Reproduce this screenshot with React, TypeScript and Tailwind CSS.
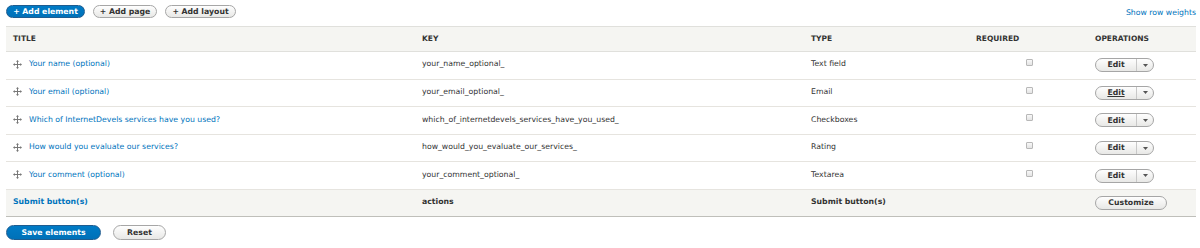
import React from "react";

const rows = [
  { title: "Your name (optional)", key: "your_name_optional_", type: "Text field", underline: false },
  { title: "Your email (optional)", key: "your_email_optional_", type: "Email", underline: true },
  { title: "Which of InternetDevels services have you used?", key: "which_of_internetdevels_services_have_you_used_", type: "Checkboxes", underline: false },
  { title: "How would you evaluate our services?", key: "how_would_you_evaluate_our_services_", type: "Rating", underline: false },
  { title: "Your comment (optional)", key: "your_comment_optional_", type: "Textarea", underline: false },
];

function DragHandle() {
  return (
    <svg width="9" height="9" viewBox="0 0 18 18" className="shrink-0">
      <path
        d="M9 0 L12 3.5 H10 V8 H14.5 V6 L18 9 L14.5 12 V10 H10 V14.5 H12 L9 18 L6 14.5 H8 V10 H3.5 V12 L0 9 L3.5 6 V8 H8 V3.5 H6 Z"
        fill="#787878"
      />
    </svg>
  );
}

function SecondaryButton({ children, className = "" }: { children: React.ReactNode; className?: string }) {
  return (
    <span
      className={
        "inline-flex items-center justify-center rounded-full border border-[#a6a6a6] bg-gradient-to-b from-[#fefefe] to-[#e8e8e6] text-[#333] font-bold " +
        className
      }
    >
      {children}
    </span>
  );
}

function EditButton({ underline }: { underline: boolean }) {
  return (
    <span className="inline-flex h-[14px] items-stretch rounded-full border border-[#a6a6a6] bg-gradient-to-b from-[#fefefe] to-[#e8e8e6] text-[#333] font-bold text-[7.75px] leading-none">
      <span className={"flex w-[40px] items-center justify-center " + (underline ? "underline" : "")}>Edit</span>
      <span className="flex w-[17px] items-center justify-center border-l border-[#c8c8c8]">
        <svg width="5" height="3" viewBox="0 0 5 3">
          <path d="M0 0 H5 L2.5 3 Z" fill="#555" />
        </svg>
      </span>
    </span>
  );
}

export default function App() {
  return (
    <div
      className="w-[1200px] h-[248px] bg-white text-[#333] text-[7.75px] leading-none"
      style={{ fontFamily: '"DejaVu Sans", Verdana, sans-serif' }}
    >
      <div className="flex items-end justify-between pl-[6px] pr-[4px] pt-[5px]">
        <div className="flex gap-[8px]">
          <span className="inline-flex h-[13px] w-[79px] items-center justify-center rounded-full border border-[#1e5c90] bg-gradient-to-b from-[#007bc6] to-[#0071b8] text-white font-bold text-[7.75px]">
            + Add element
          </span>
          <SecondaryButton className="h-[13px] w-[64px] text-[7.75px]">+ Add page</SecondaryButton>
          <SecondaryButton className="h-[13px] w-[71px] text-[7.75px]">+ Add layout</SecondaryButton>
        </div>
        <span className="text-[#0074bd] text-[7.75px] mb-[1px]">Show row weights</span>
      </div>

      <div className="ml-[6px] mr-[4px] mt-[8px]">
        <table className="w-full border-collapse table-fixed">
          <colgroup>
            <col className="w-[409px]" />
            <col className="w-[389px]" />
            <col className="w-[165px]" />
            <col className="w-[119px]" />
            <col />
          </colgroup>
          <thead>
            <tr className="h-[25px] bg-[#f5f5f2] border-t border-[#e0e0dc] border-b border-[#bfbfba] text-left">
              <th className="pl-[7px] font-bold text-[7.5px] text-[#333]">TITLE</th>
              <th className="pl-[7px] font-bold text-[7.5px] text-[#333]">KEY</th>
              <th className="pl-[7px] font-bold text-[7.5px] text-[#333]">TYPE</th>
              <th className="pl-[7px] font-bold text-[7.5px] text-[#333]">REQUIRED</th>
              <th className="pl-[7px] font-bold text-[7.5px] text-[#333]">OPERATIONS</th>
            </tr>
          </thead>
          <tbody>
            {rows.map((r) => (
              <tr key={r.key} className="h-[27.6px] border-b border-[#e6e4df]">
                <td className="pl-[7px] pb-[2px]">
                  <div className="flex items-center gap-[7px]">
                    <DragHandle />
                    <span className="text-[#0074bd]">{r.title}</span>
                  </div>
                </td>
                <td className="pl-[7px] pb-[2px]">{r.key}</td>
                <td className="pl-[7px] pb-[2px]">{r.type}</td>
                <td className="pl-[57px] pb-[2px]">
                  <span className="block h-[7px] w-[7px] rounded-[1px] border border-[#b8b8b8] bg-gradient-to-b from-[#f8f8f8] to-[#e4e4e4] -mt-[3px]" />
                </td>
                <td className="pl-[7px]">
                  <EditButton underline={r.underline} />
                </td>
              </tr>
            ))}
            <tr className="h-[27px] bg-[#f5f5f2] border-b border-[#bfbfba]">
              <td className="pl-[7px] pb-[2px] font-bold text-[#0074bd]">Submit button(s)</td>
              <td className="pl-[7px] pb-[2px] font-bold">actions</td>
              <td className="pl-[7px] pb-[2px] font-bold">Submit button(s)</td>
              <td></td>
              <td className="pl-[7px]">
                <SecondaryButton className="h-[14px] w-[72px] text-[7.75px]">Customize</SecondaryButton>
              </td>
            </tr>
          </tbody>
        </table>
      </div>

      <div className="flex gap-[12px] px-[6px] mt-[8px]">
        <span className="inline-flex h-[15px] w-[95px] items-center justify-center rounded-full border border-[#1e5c90] bg-gradient-to-b from-[#007bc6] to-[#0071b8] text-white font-bold text-[7.75px]">
          Save elements
        </span>
        <SecondaryButton className="h-[15px] w-[53px] text-[7.75px]">Reset</SecondaryButton>
      </div>
    </div>
  );
}
